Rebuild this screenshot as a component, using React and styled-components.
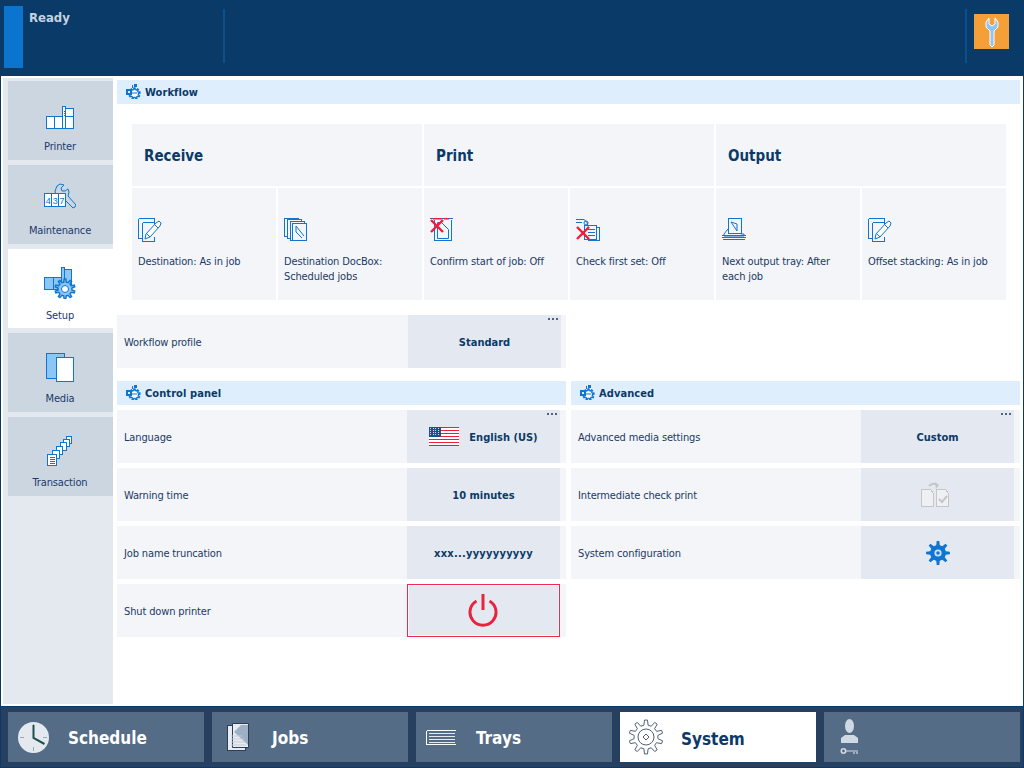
import React from 'react'
import styled, { createGlobalStyle } from 'styled-components'

const GlobalStyle = createGlobalStyle`
  html, body {
    margin: 0;
    padding: 0;
    background: #0a3a68;
  }
  body {
    font-family: "DejaVu Sans Condensed", "Noto Sans", sans-serif;
    font-size: 11px;
    letter-spacing: -0.14px;
    color: #1c3a66;
  }
`

const BLUE = '#0f75d0'
const LIGHT = '#8cc6f7'

const Page = styled.div`
  width: 1024px;
  height: 768px;
  overflow: hidden;
  display: flex;
  flex-direction: column;
  background: #0a3a68;
`
const TopBar = styled.header`
  height: 76px;
  flex: none;
  display: flex;
  align-items: flex-start;
`
const StatusBlock = styled.div`
  width: 19px;
  height: 62px;
  margin: 6px 0 0 4px;
  background: #0b74ce;
`
const StatusText = styled.div`
  width: 194px;
  margin: 10px 0 0 6px;
  font-size: 13px;
  font-weight: 700;
  letter-spacing: 0;
  line-height: 16px;
  color: #c4d3e3;
`
const Divider = styled.div`
  width: 2px;
  height: 54px;
  margin-top: 9px;
  background: #0b4f8e;
`
const Spacer = styled.div`
  flex: 1;
`
const WrenchButton = styled.div`
  width: 35px;
  height: 35px;
  margin: 14px 15px 0 7px;
  background: #f59f38;
  display: flex;
  align-items: center;
  justify-content: center;
`
const Main = styled.main`
  flex: 1;
  min-height: 0;
  margin: 0 1px;
  padding: 2px 3px 2px 2px;
  background: #fff;
  display: flex;
`
const Sidebar = styled.nav`
  width: 110px;
  flex: none;
  padding: 3px 0 0 5px;
  box-sizing: border-box;
  background: #e4e9f0;
  display: flex;
  flex-direction: column;
  gap: 5px;
`
const SideTab = styled.div`
  height: 79px;
  background: ${props => (props.$active ? '#fff' : '#cbd6e0')};
  display: flex;
  flex-direction: column;
  align-items: center;
  justify-content: flex-end;
  padding: 0 1px ${props => (props.$active ? 5 : 6)}px 0;
  box-sizing: border-box;
  color: #1c3a6e;
  line-height: 14px;
`
const SideIcon = styled.div`
  height: 32px;
  margin-bottom: 10px;
  display: flex;
  align-items: flex-end;
  justify-content: center;
`
const Content = styled.section`
  flex: 1;
  min-width: 0;
  padding: 2px 0 0 4px;
`
const SectionHeader = styled.h2`
  margin: 0;
  height: 24px;
  background: #deeefc;
  display: flex;
  align-items: center;
  gap: 4px;
  padding-left: 9px;
  font-size: 11px;
  font-weight: 700;
  letter-spacing: 0.08px;
  color: #0c3a68;
  svg {
    margin-bottom: 2px;
  }
`
const WorkflowGrid = styled.div`
  margin: 20px 0 15px 15px;
  width: 874px;
  display: grid;
  grid-template-columns: repeat(6, 144px);
  grid-template-rows: 62px 112px;
  gap: 2px;
`
const StageTitle = styled.div`
  grid-column: span 2;
  background: #f3f5f8;
  display: flex;
  align-items: center;
  padding: 2px 0 0 12px;
  box-sizing: border-box;
  font-size: 15px;
  font-weight: 700;
  letter-spacing: 0;
  color: #0c3a68;
`
const StageCell = styled.div`
  background: #f3f5f8;
  padding: 30px 6px 0 6px;
  line-height: 15px;
  color: #1c3a66;
`
const CellIcon = styled.div`
  height: 26px;
  margin-bottom: 10px;
`
const Columns = styled.div`
  display: grid;
  grid-template-columns: 449px 449px;
  column-gap: 5px;
`
const Column = styled.div`
  display: flex;
  flex-direction: column;
  gap: 5px;
`
const Row = styled.div`
  height: 53px;
  background: #f3f5f8;
  display: flex;
  align-items: center;
  padding-left: 7px;
  margin-bottom: ${props => props.$gapBelow || 0}px;
`
const RowLabel = styled.div`
  flex: 1;
  padding-top: 2px;
`
const ValueButton = styled.div`
  position: relative;
  width: 153px;
  height: 100%;
  margin-right: ${props => props.$right ?? 6}px;
  box-sizing: border-box;
  background: #e4e9f1;
  display: flex;
  align-items: center;
  justify-content: center;
  gap: 10px;
  border: ${props => (props.$danger ? '1px solid #ee2a50' : 'none')};
  box-shadow: ${props => (props.$danger ? 'inset 0 0 0 1px #f8f9fb' : 'none')};
`
const ValueText = styled.span`
  padding-top: 2px;
  font-weight: 700;
  letter-spacing: ${props => props.$spacing || 0}px;
  color: #0c3a68;
`
const MoreDots = styled.div`
  position: absolute;
  top: 3px;
  right: 3px;
  display: flex;
  gap: 2px;
  span {
    width: 2px;
    height: 2px;
    background: #4f6482;
  }
`
const BottomBar = styled.footer`
  height: 62px;
  flex: none;
  box-sizing: border-box;
  padding: 6px 4px 6px 8px;
  background: #27405f;
  box-shadow: inset 0 -1px 0 #0a3a68, inset 0 1px 0 #0a3a68, inset 1px 0 0 #0a3a68, inset -1px 0 0 #0a3a68;
  display: flex;
  gap: 8px;
`
const BottomTab = styled.div`
  width: 196px;
  background: ${props => (props.$active ? '#fff' : '#556c87')};
  color: ${props => (props.$active ? '#0c3a68' : '#fff')};
  display: flex;
  align-items: center;
  font-size: 17px;
  font-weight: 700;
  letter-spacing: 0;
`
const TabIcon = styled.div`
  width: 60px;
  flex: none;
  padding-right: 8px;
  box-sizing: border-box;
  display: flex;
  justify-content: center;
`
const TabLabel = styled.span`
  padding-top: ${props => (props.$active ? 3 : 2)}px;
  margin-left: ${props => (props.$active ? 1 : 0)}px;
`

function gearPath(cx, cy, inner, outer, teeth) {
  const step = (Math.PI * 2) / teeth
  const pts = []
  for (let i = 0; i < teeth; i++) {
    const a = i * step - Math.PI / 2
    const w = step * 0.2
    const p = (r, t) => `${(cx + r * Math.cos(t)).toFixed(2)} ${(cy + r * Math.sin(t)).toFixed(2)}`
    pts.push(p(inner, a - w * 1.4), p(outer, a - w * 0.7), p(outer, a + w * 0.7), p(inner, a + w * 1.4))
  }
  return 'M' + pts.join('L') + 'Z'
}

const Svg = ({ w, h, children, crisp }) => (
  <svg width={w} height={h} viewBox={`0 0 ${w} ${h}`} fill="none" shapeRendering={crisp ? 'crispEdges' : undefined}>
    {children}
  </svg>
)

const PrinterIcon = () => (
  <Svg w={28} h={24} crisp>
    <g stroke={BLUE} fill="#fff">
      <rect x=".5" y="10.5" width="8" height="12" />
      <rect x="8.5" y="10.5" width="8" height="12" />
      <rect x="16.5" y=".5" width="3" height="22" />
      <rect x="19.5" y="2.5" width="8" height="20" />
      <path d="M19.5 10.5h8" />
      <path d="M17.5 5.5h1M17.5 7.5h1M17.5 9.5h1" />
    </g>
  </Svg>
)
const MaintenanceIcon = () => (
  <Svg w={32} h={31}>
    <path d="M16 1l4 1-3 3 1 3 3 0 3-2 1 3-1 4 8 9-1 2-2 1-9-9-4 0-4-3-1-5 2-5z" fill="#cbd6e0" stroke={BLUE} />
    <rect x=".5" y="10.5" width="21" height="13" fill="#fff" stroke={BLUE} shapeRendering="crispEdges" />
    <path d="M7.5 10.5v13M14.5 10.5v13" stroke={BLUE} shapeRendering="crispEdges" />
    <text x="1.6" y="21" fontSize="9" fill={BLUE} fontFamily="Liberation Mono, monospace" textLength="19">437</text>
  </Svg>
)
const SetupIcon = () => (
  <Svg w={33} h={32}>
    <g stroke={BLUE} fill={LIGHT} shapeRendering="crispEdges">
      <rect x=".5" y="10.5" width="9" height="12" />
      <rect x="9.5" y="10.5" width="8" height="12" />
      <rect x="17.5" y=".5" width="3" height="22" />
      <rect x="20.5" y="2.5" width="7" height="20" />
    </g>
    <path d={gearPath(21, 22, 7, 10, 10)} fill={LIGHT} stroke={BLUE} strokeWidth="1.4" />
    <circle cx="21" cy="22" r="3.5" fill="#fff" stroke={BLUE} />
  </Svg>
)
const MediaIcon = () => (
  <Svg w={28} h={29} crisp>
    <rect x=".5" y=".5" width="18" height="25" fill={LIGHT} stroke={BLUE} />
    <rect x="10.5" y="4.5" width="17" height="24" fill="#fff" stroke={BLUE} />
  </Svg>
)
const TransactionIcon = () => (
  <Svg w={26} h={30} crisp>
    <g stroke={BLUE} fill="#fff">
      <rect x="19.5" y=".5" width="5" height="7" />
      <rect x="16.5" y="3.5" width="6" height="7" />
      <rect x="13.5" y="6.5" width="6" height="8" />
      <rect x="9.5" y="10.5" width="6" height="8" />
      <rect x="5.5" y="14.5" width="7" height="8" />
      <rect x=".5" y="18.5" width="9" height="11" />
      <path d="M2.5 21.5h5M2.5 23.5h5M2.5 25.5h5M2.5 27.5h5" />
    </g>
  </Svg>
)
const SectionIcon = () => (
  <svg width="15" height="15" viewBox="0 0 15 15" fill="none">
    <rect x="8" y="0" width="3" height="3" fill={BLUE} />
    <rect x="6" y="1" width="1" height="3" fill={BLUE} />
    <path d={gearPath(8.5, 9.5, 4, 5.6, 9)} fill="#fff" stroke={BLUE} strokeWidth="1.3" />
    <rect x="0" y="5" width="6" height="6" fill={BLUE} />
    <rect x="2" y="7" width="2" height="2" fill="#deeefc" />
    <path d="M5 9h6" stroke={BLUE} />
  </svg>
)
const PencilIcon = () => (
  <Svg w={24} h={24}>
    <path d="M.5 .5h16v3M.5 .5v20h4" stroke={BLUE} shapeRendering="crispEdges" />
    <path d="M4.5 4.5h12v3M4.5 4.5v19h12v-5" stroke={BLUE} shapeRendering="crispEdges" />
    <path d="M7 21l1-5L18 5l3 -2 2 2 -1 3L12 19z" fill="#fff" stroke={BLUE} />
    <path d="M9 16l3 3M17 7l3 3" stroke={BLUE} />
  </Svg>
)
const DocBoxIcon = () => (
  <Svg w={24} h={24} crisp>
    <g stroke={BLUE}>
      <rect x=".5" y=".5" width="14" height="18" fill="#f3f5f8" />
      <rect x="3.5" y="1.5" width="14" height="19" fill="#f3f5f8" />
      <rect x="6.5" y="3.5" width="14" height="19" fill="#f3f5f8" strokeWidth="1" />
      <rect x="8.5" y="5.5" width="14" height="17" fill="#f3f5f8" />
    </g>
    <path d="M12 8l8 10" stroke={BLUE} shapeRendering="auto" />
    <path d="M12 8v6l6 6" stroke={BLUE} shapeRendering="auto" />
  </Svg>
)
const RedCross = ({ x = 0, y = 0 }) => (
  <path d={`M${x} ${y}l12 12M${x + 12} ${y}l-12 12`} stroke="#ee1c3c" strokeWidth="2.4" />
)
const ConfirmIcon = () => (
  <Svg w={24} h={24}>
    <path d="M4.5 1.5v21h17v-21" stroke={BLUE} shapeRendering="crispEdges" />
    <path d="M7.5 4.5v16h11v-9l-7-7z" stroke={BLUE} />
    <path d="M0 .5h23" stroke={BLUE} shapeRendering="crispEdges" />
    <path d="M3 .5h9M14 .5h5" stroke="#ee1c3c" strokeWidth="2" />
    <RedCross x={1} y={2} />
  </Svg>
)
const CheckSetIcon = () => (
  <Svg w={24} h={24}>
    <g stroke={BLUE} shapeRendering="crispEdges" fill="#f3f5f8">
      <rect x="12.5" y="9.5" width="11" height="13" />
      <rect x="8.5" y="7.5" width="12" height="14" />
      <path d="M11.5 11.5h7M11.5 14.5h7M11.5 17.5h7" />
    </g>
    <path d="M0 1.5h8q4 2 4 7M0 4.5h6" stroke={BLUE} />
    <circle cx="10" cy="5" r="2" stroke={BLUE} />
    <RedCross x={1} y={9} />
  </Svg>
)
const OutputIcon = () => (
  <Svg w={24} h={23}>
    <rect x="6.5" y=".5" width="13" height="15" stroke={BLUE} shapeRendering="crispEdges" />
    <path d="M9 4l6 9V6z" stroke={BLUE} />
    <path d="M6 11L2 16v2h20v-2h-3" stroke={BLUE} />
    <path d="M0 17.5h24M0 19.5h24M1 21.5h22" stroke={BLUE} shapeRendering="crispEdges" />
  </Svg>
)
const FlagIcon = () => (
  <Svg w={30} h={19} crisp>
    <rect width="30" height="19" fill="#fff" />
    {[0, 3, 6, 9, 12, 15, 18].map(y => (
      <rect key={y} x="0" y={y} width="30" height="1" fill="#f01c3c" />
    ))}
    <rect x="0" y="0" width="12" height="10" fill="#1c4f98" />
    {[1, 3, 5, 7].map(y =>
      [1, 3.5, 6, 8.5].map(x => <rect key={`${x}-${y}`} x={x} y={y} width="1" height="1" fill="#cfe0f5" />)
    )}
  </Svg>
)
const CheckPrintIcon = () => (
  <Svg w={34} h={27}>
    <g stroke="#c4c6c8" fill="#eef0f3" shapeRendering="crispEdges">
      <path d="M.5 8.5h9l3 4v13H.5z" />
      <path d="M15.5 8.5h9l3 4v13h-12z" />
    </g>
    <path d="M18 18l3 3 5-6" stroke="#c4c6c8" strokeWidth="2" />
    <path d="M8 5q4-4 8-1" stroke="#c4c6c8" strokeWidth="2" />
    <path d="M14 1l4 3-3 4z" fill="#c4c6c8" />
  </Svg>
)
const BlueGear = () => (
  <Svg w={24} h={24}>
    <path d={gearPath(12, 12, 8, 12, 8)} fill={BLUE} />
    <circle cx="12" cy="12" r="7.5" fill={BLUE} />
    <circle cx="12" cy="12" r="3.6" fill="#cfe0f5" />
    <circle cx="12" cy="12" r="1.8" fill={BLUE} />
  </Svg>
)
const PowerIcon = () => (
  <Svg w={32} h={34}>
    <path d="M8.5 7a13 13 0 1 0 13 0" stroke="#e8243c" strokeWidth="3" />
    <rect x="13.5" y="0" width="3" height="16" fill="#e8243c" />
  </Svg>
)
const WrenchIcon = () => (
  <Svg w={14} h={30}>
    <path d="M4 1 1 5v5l3 3 1 1v14l2 2 2-2V14l1-1 3-3V5l-3-4v6L7 9 4 7z" fill={LIGHT} stroke="#fff" />
  </Svg>
)
const ClockIcon = () => (
  <Svg w={33} h={31}>
    <circle cx="15.5" cy="15.5" r="15.5" fill="#e4e9f0" />
    <path d="M15.5 2v4M15.5 25v4M2 15.5h4M25 15.5h4" stroke="#9aa7b5" />
    <path d="M15.5 3v13l11 6" stroke="#1f5050" strokeWidth="2" />
  </Svg>
)
const JobsIcon = () => (
  <Svg w={22} h={28}>
    <rect x=".5" y="2.5" width="18" height="25" fill="#e8ecf2" stroke="#2b3f58" />
    <path d="M5.5 .5H21.5v24h-16z" fill="#e8ecf2" stroke="#2b3f58" />
    <path d="M7 9 14 2h7v20z" fill="#9fb0c4" />
    <path d="M4 13h11M4 16h13M4 19h15M4 22h15" stroke="#c3cdd9" />
  </Svg>
)
const TraysIcon = () => (
  <Svg w={32} h={15} crisp>
    <path d="M.5 .5H29.5M.5 14.5h29M.5 .5v14" stroke="#fff" />
    <path d="M3 3.5h26M3 6.5h26M3 9.5h26M3 12.5h26" stroke="#e4e9f0" />
  </Svg>
)
const SystemIcon = () => (
  <Svg w={36} h={36}>
    <path d={gearPath(18, 18, 12, 17, 10)} fill="#fff" stroke="#4f6278" />
    <circle cx="18" cy="18" r="8" stroke="#4f6278" />
    <path d="M18 15l3 3-3 3-3-3z" stroke="#4f6278" />
  </Svg>
)
const UserKeyIcon = () => (
  <Svg w={20} h={36}>
    <ellipse cx="9.5" cy="7" rx="4.5" ry="7" fill="#cfd9e4" />
    <path d="M1 24v-5l4-3h9l4 3v5z" fill="#cfd9e4" />
    <circle cx="3.5" cy="32" r="2.2" stroke="#cfd9e4" strokeWidth="1.6" />
    <path d="M6 32h12M14 33v2M17 33v2" stroke="#cfd9e4" strokeWidth="1.2" />
  </Svg>
)

const sideTabs = [
  { label: 'Printer', icon: <PrinterIcon /> },
  { label: 'Maintenance', icon: <MaintenanceIcon /> },
  { label: 'Setup', icon: <SetupIcon />, active: true },
  { label: 'Media', icon: <MediaIcon /> },
  { label: 'Transaction', icon: <TransactionIcon /> },
]

const stages = ['Receive', 'Print', 'Output']

const stageCells = [
  { icon: <PencilIcon />, text: 'Destination: As in job' },
  { icon: <DocBoxIcon />, text: 'Destination DocBox: Scheduled jobs' },
  { icon: <ConfirmIcon />, text: 'Confirm start of job: Off' },
  { icon: <CheckSetIcon />, text: 'Check first set: Off' },
  { icon: <OutputIcon />, text: 'Next output tray: After each job' },
  { icon: <PencilIcon />, text: 'Offset stacking: As in job' },
]

const bottomTabs = [
  { label: 'Schedule', icon: <ClockIcon /> },
  { label: 'Jobs', icon: <JobsIcon /> },
  { label: 'Trays', icon: <TraysIcon /> },
  { label: 'System', icon: <SystemIcon />, active: true },
  { label: '', icon: <UserKeyIcon /> },
]

const Dots = () => (
  <MoreDots>
    <span />
    <span />
    <span />
  </MoreDots>
)

export default function App() {
  return (
    <Page>
      <GlobalStyle />
      <TopBar>
        <StatusBlock />
        <StatusText>Ready</StatusText>
        <Divider />
        <Spacer />
        <Divider />
        <WrenchButton>
          <WrenchIcon />
        </WrenchButton>
      </TopBar>
      <Main>
        <Sidebar>
          {sideTabs.map(tab => (
            <SideTab key={tab.label} $active={tab.active}>
              <SideIcon>{tab.icon}</SideIcon>
              {tab.label}
            </SideTab>
          ))}
        </Sidebar>
        <Content>
          <SectionHeader>
            <SectionIcon />
            Workflow
          </SectionHeader>
          <WorkflowGrid>
            {stages.map(stage => (
              <StageTitle key={stage}>{stage}</StageTitle>
            ))}
            {stageCells.map(cell => (
              <StageCell key={cell.text}>
                <CellIcon>{cell.icon}</CellIcon>
                {cell.text}
              </StageCell>
            ))}
          </WorkflowGrid>
          <Columns>
            <Column>
              <Row $gapBelow={13}>
                <RowLabel>Workflow profile</RowLabel>
                <ValueButton $right={5}>
                  <ValueText>Standard</ValueText>
                  <Dots />
                </ValueButton>
              </Row>
            </Column>
            <div />
            <Column>
              <SectionHeader>
                <SectionIcon />
                Control panel
              </SectionHeader>
              <Row>
                <RowLabel>Language</RowLabel>
                <ValueButton>
                  <FlagIcon />
                  <ValueText>English (US)</ValueText>
                  <Dots />
                </ValueButton>
              </Row>
              <Row>
                <RowLabel>Warning time</RowLabel>
                <ValueButton>
                  <ValueText>10 minutes</ValueText>
                </ValueButton>
              </Row>
              <Row>
                <RowLabel>Job name truncation</RowLabel>
                <ValueButton>
                  <ValueText $spacing={0.25}>xxx...yyyyyyyyyy</ValueText>
                </ValueButton>
              </Row>
              <Row>
                <RowLabel>Shut down printer</RowLabel>
                <ValueButton $danger>
                  <PowerIcon />
                </ValueButton>
              </Row>
            </Column>
            <Column>
              <SectionHeader>
                <SectionIcon />
                Advanced
              </SectionHeader>
              <Row>
                <RowLabel>Advanced media settings</RowLabel>
                <ValueButton>
                  <ValueText>Custom</ValueText>
                  <Dots />
                </ValueButton>
              </Row>
              <Row>
                <RowLabel>Intermediate check print</RowLabel>
                <ValueButton>
                  <CheckPrintIcon />
                </ValueButton>
              </Row>
              <Row>
                <RowLabel>System configuration</RowLabel>
                <ValueButton>
                  <BlueGear />
                </ValueButton>
              </Row>
            </Column>
          </Columns>
        </Content>
      </Main>
      <BottomBar>
        {bottomTabs.map((tab, i) => (
          <BottomTab key={i} $active={tab.active}>
            <TabIcon>{tab.icon}</TabIcon>
            <TabLabel $active={tab.active}>{tab.label}</TabLabel>
          </BottomTab>
        ))}
      </BottomBar>
    </Page>
  )
}
